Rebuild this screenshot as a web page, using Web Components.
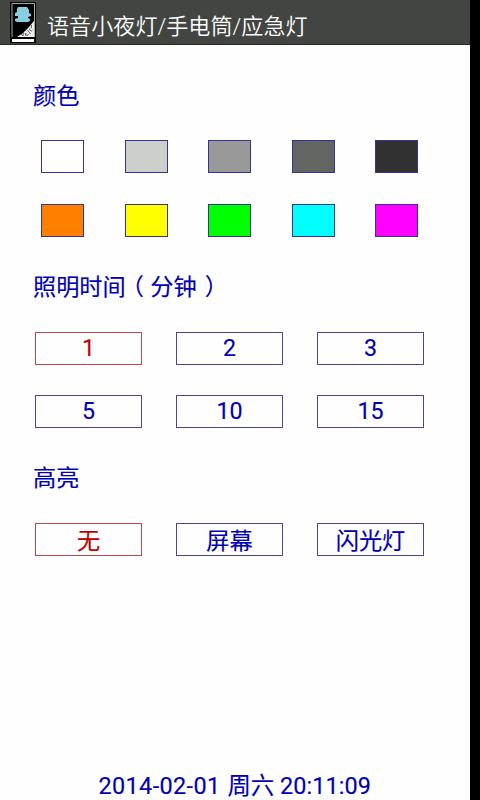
<!DOCTYPE html>
<html lang="zh-CN">
<head>
<meta charset="utf-8">
<title>语音小夜灯</title>
<style>
html,body{margin:0;height:100%;background:#000;overflow:hidden}
body{font-family:Roboto,"Noto Sans CJK SC",sans-serif}
</style>
</head>
<body>
<night-light-app></night-light-app>
<script>
const define = (name, html, setup) => customElements.define(name, class extends HTMLElement {
  connectedCallback() {
    if (this.shadowRoot) return;
    const root = this.attachShadow({mode: 'open'});
    const t = document.createElement('template');
    t.innerHTML = html;
    root.append(t.content.cloneNode(true));
    if (setup) setup(this, root);
  }
});

define('lamp-icon', `
<style>:host{display:block;width:26px;height:41px}svg{display:block}</style>
<svg width="26" height="41" viewBox="0 0 26 41">
  <rect width="26" height="41" fill="#000"/>
  <path d="M2 35V1.5H24.5V35" fill="none" stroke="#a9adaa"/>
  <path d="M24 19V35H7L13 31L19 25Z" fill="#eef0ee"/>
  <path d="M8 5H17L19 8V11L21 12V14L18 15V16L20 17V19L18 20H7L5 19V17L8 16V14L5 14V11L7 10V7Z" fill="#87cfe0"/>
  <path d="M2 37H24V40H2Z" fill="#fff"/>
  <path d="M11 32l2 2l.5-4m1.500 1l1 3m.5-3a1.300 1.300 0 1 0 2 1m-1-4l3 4m0-6a1.500 1.500 0 1 0 2 2m-1-5v3" fill="none" stroke="#555" stroke-width=".9"/>
</svg>`);

define('title-bar', `
<style>
:host{display:flex;height:45px;box-sizing:border-box;background:#424541;border-bottom:1px solid #282a28;padding:2px 0 0 10px;color:#fff;align-items:flex-start}
.t{margin-left:11px;font-size:22.1px;line-height:32px;padding-top:8px;white-space:nowrap;font-weight:350}
</style>
<lamp-icon></lamp-icon><div class="t"><slot></slot></div>`);

define('section-heading', `
<style>:host{display:block;height:34px;line-height:34px;font-size:23.2px;color:#0000b4;white-space:nowrap;-webkit-text-stroke:.15px}</style>
<slot></slot>`);

define('color-swatch', `
<style>:host{display:block;width:43px;height:33px;box-sizing:border-box;border:1px solid #373390}</style>`,
  host => host.style.background = host.getAttribute('value'));

define('choice-box', `
<style>
:host{display:block;width:107px;height:33px;box-sizing:border-box;border:1px solid #4c488f;color:#0000b4;font-size:23.2px;line-height:31px;text-align:center;white-space:nowrap;-webkit-text-stroke:.15px}
:host([cjk]){line-height:34px}
:host([selected]){border-color:#b54a4a;color:#c00000}
</style><slot></slot>`);

define('box-grid', `
<style>
:host{display:grid;grid-template-columns:repeat(3,107px);column-gap:34px;row-gap:30px;padding-left:2px}
:host([swatches]){grid-template-columns:repeat(5,43px);column-gap:40.5px;row-gap:31px;padding-left:8px}
</style><slot></slot>`);

define('night-light-app', `
<style>
:host{display:flex;flex-direction:column;width:469.5px;height:800px;background:#fefefe}
main{display:flex;flex-direction:column;flex:1;padding:34px 0 0 33px}
.g1{margin:27px 0 33px}.g2{margin:28px 0 33px}.g3{margin-top:28px}
.open,.close{font-feature-settings:"halt"}
.open{margin:0 6.5px}.close{margin-left:8px}
.date{letter-spacing:.4px;margin-right:1px}.time{letter-spacing:.1px}
footer{height:28px;line-height:28px;text-align:center;color:#0000b4;font-size:23.4px;white-space:nowrap;-webkit-text-stroke:.15px}
</style>
<title-bar>语音小夜灯/手电筒/应急灯</title-bar>
<main>
  <section-heading>颜色</section-heading>
  <box-grid class="g1" swatches>
    <color-swatch value="#ffffff"></color-swatch><color-swatch value="#cccfcc"></color-swatch><color-swatch value="#999999"></color-swatch><color-swatch value="#636562"></color-swatch><color-swatch value="#313131"></color-swatch>
    <color-swatch value="#ff7f00"></color-swatch><color-swatch value="#ffff00"></color-swatch><color-swatch value="#00ff00"></color-swatch><color-swatch value="#00ffff"></color-swatch><color-swatch value="#ff00ff"></color-swatch>
  </box-grid>
  <section-heading>照明时间<span class="open">（</span>分钟<span class="close">）</span></section-heading>
  <box-grid class="g2">
    <choice-box selected>1</choice-box><choice-box>2</choice-box><choice-box>3</choice-box>
    <choice-box>5</choice-box><choice-box>10</choice-box><choice-box>15</choice-box>
  </box-grid>
  <section-heading>高亮</section-heading>
  <box-grid class="g3">
    <choice-box selected cjk>无</choice-box><choice-box cjk>屏幕</choice-box><choice-box cjk>闪光灯</choice-box>
  </box-grid>
</main>
<footer><span class="date">2014-02-01</span> 周六 <span class="time">20:11:09</span></footer>`);
</script>
</body>
</html>
